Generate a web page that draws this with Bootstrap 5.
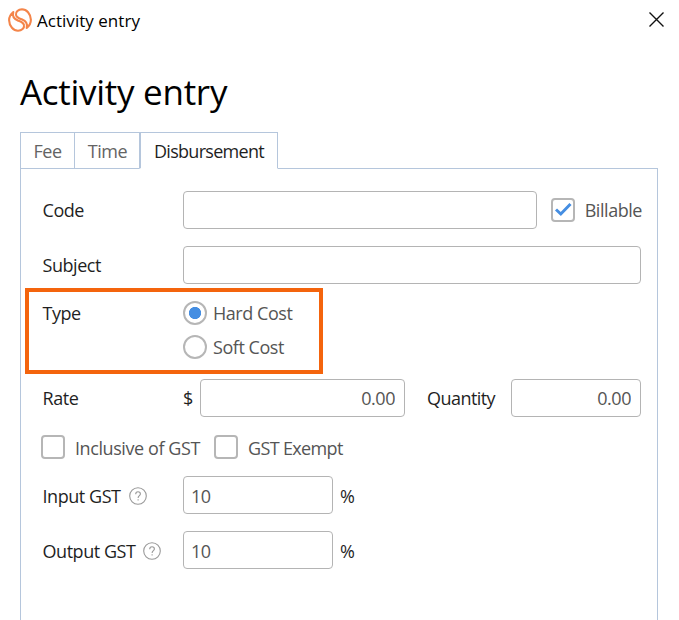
<!DOCTYPE html>
<html lang="en">
<head>
<meta charset="utf-8">
<meta name="viewport" content="width=device-width, initial-scale=1">
<title>Activity entry</title>
<link href="https://cdn.jsdelivr.net/npm/bootstrap@5.3.0/dist/css/bootstrap.min.css" rel="stylesheet">
<style>
  html, body { height: 100%; }
  body { font-family: "Open Sans", "Noto Sans", sans-serif; font-size: 18px; line-height: 24px; letter-spacing: -.45px; color: #1f1f1f; background: #fff; overflow: hidden; }
  .window { height: 620px; }
  .title-bar { height: 40px; padding: 0 14px 0 8px; color: #000; }
  .title-text { font-size: 17px; letter-spacing: .03px; margin-left: 5px; padding-top: 2px; }
  .page-title { font-size: 35px; line-height: 48px; letter-spacing: -.28px; color: #000; margin: 28px 0 16px 20px; font-weight: 400; }
  .tabs-area { margin: 0 21px 0 20px; }
  .nav-tabs { --bs-nav-tabs-border-width: 0; --bs-nav-tabs-border-radius: 0; height: 37px; margin-bottom: -1px; border: 0; z-index: 1; }
  .nav-tabs .nav-link { height: 37px; padding: 6px 0 0; border: 1px solid #b5c6dc; color: #646464; text-align: center; margin: 0; }
  .nav-tabs .nav-link.active { color: #1f1f1f; border: 1px solid #b5c6dc; border-bottom-color: #fff; border-left-width: 2px; background: #fff; letter-spacing: -.7px; }
  .tab-fee { width: 55px; }
  .nav-tabs .tab-time { width: 64px; border-left: 0; border-right: 0; padding-left: 1px; }
  .tab-disb { width: 139px; }
  .panel { border: 1px solid #b5c6dc; border-bottom: 0; padding: 22px 16px 0 21px; }
  .row-38 { height: 38px; margin-bottom: 17px; }
  .lbl { width: 141px; flex: none; padding-left: .5px; }
  .form-control { height: 38px; border: 1px solid #b4b4b4; border-radius: 4px; font-size: 18px; letter-spacing: -.45px; color: #555; padding: 0 9px 0 8px; }
  .form-check-input { width: 24px; height: 24px; margin: 0; border: 2px solid #b6b6b6; flex: none; }
  .form-check-input[type=checkbox] { border-radius: 4px; }
  .form-check-input:checked { background-color: #fff; border-color: #b6b6b6; }
  .form-check-input[type=checkbox]:checked { background-image: none; }
  .form-check-input[type=radio]:checked { background-image: radial-gradient(circle, #458ee2 0 5.700px, transparent 6.500px); background-size: 100% 100%; }
  .check-wrap svg { position: absolute; left: 4px; top: 4px; pointer-events: none; }
  .opt { color: #555; }
  .t-bill { margin-left: 10px; margin-right: -1px; }
  .radio-text { margin-left: 6px; }
  .radios { gap: 10px; }
  .highlight { height: 86px; width: 298px; border: 4px solid #f4640d; margin: -13px 0 5px -17px; padding: 9px 0 0 13px; }
  .checks { height: 24px; margin: 18px 0 17px -1px; }
  .checks .opt { margin-left: 10px; letter-spacing: -.42px; padding-top: 1px; }
  .checks .t-exempt { letter-spacing: -.65px; }
  .t-incl { width: 139px; }
  .w-code { width: 354px; }
  .cur { width: 17px; flex: none; }
  .w-rate { width: 205px; }
  .t-qty { margin-left: 22px; letter-spacing: -.55px; }
  .w-qty { width: 130px; }
  .w-gst { width: 150px; padding-left: 7px; padding-top: 1px; }
  .gst .lbl, .gst .pct { padding-top: 1px; }
  .help { margin-left: 8px; }
  .pct { margin-left: 7px; }
</style>
</head>
<body>
<div class="window d-flex flex-column">
  <header class="title-bar d-flex align-items-center flex-shrink-0">
    <svg width="24" height="24" viewBox="0 0 24 24" fill="none" stroke="#f4854a" stroke-width="2.1" stroke-linejoin="round">
      <path d="M5.300 4C2.600 6.200 1.100 9 1.100 12.200C1.300 18.500 5.500 22.700 10 22.700C13.800 22.500 16.500 20 16 17.200C15.600 14.600 13 13.700 10.300 12.700C6.800 11.300 3.800 9 5.300 4Z"/>
      <path d="M18.700 20C21.400 17.800 22.900 15 22.900 11.800C22.700 5.500 18.500 1.300 14 1.300C10.200 1.500 7.500 4 8 6.800C8.400 9.400 11 10.300 13.700 11.300C17.200 12.700 20.200 15 18.700 20Z"/>
    </svg>
    <span class="title-text">Activity entry</span>
    <svg class="ms-auto" width="16" height="16" viewBox="0 0 16 16" stroke="#111" stroke-width="1.4"><path d="M.5 .5 14.500 14.500M14.500 .5 .5 14.500"/></svg>
  </header>
  <h1 class="page-title flex-shrink-0">Activity entry</h1>
  <main class="tabs-area flex-grow-1 d-flex flex-column">
    <ul class="nav nav-tabs position-relative flex-shrink-0">
      <li class="nav-item"><a class="nav-link tab-fee" href="#">Fee</a></li>
      <li class="nav-item"><a class="nav-link tab-time" href="#">Time</a></li>
      <li class="nav-item"><a class="nav-link active tab-disb" href="#">Disbursement</a></li>
    </ul>
    <form class="panel flex-grow-1">
      <div class="row-38 d-flex align-items-center">
        <label class="lbl">Code</label>
        <input class="form-control w-code" type="text">
        <span class="check-wrap position-relative d-flex ms-auto">
          <input class="form-check-input" type="checkbox" checked>
          <svg width="17" height="16" viewBox="0 0 17 16" fill="none" stroke="#458ee2" stroke-width="3"><path d="M1 7.500 5.800 12 15.500 2"/></svg>
        </span>
        <span class="opt t-bill">Billable</span>
      </div>
      <div class="row-38 d-flex align-items-center">
        <label class="lbl">Subject</label>
        <input class="form-control" type="text">
      </div>
      <div class="highlight d-flex align-items-start">
        <label class="lbl">Type</label>
        <div class="radios d-flex flex-column">
          <div class="d-flex align-items-center"><input class="form-check-input" type="radio" name="cost" checked><span class="opt radio-text">Hard Cost</span></div>
          <div class="d-flex align-items-center"><input class="form-check-input" type="radio" name="cost"><span class="opt radio-text">Soft Cost</span></div>
        </div>
      </div>
      <div class="row-38 d-flex align-items-center">
        <label class="lbl">Rate</label>
        <span class="cur">$</span>
        <input class="form-control w-rate text-end" type="text" value="0.00">
        <label class="t-qty">Quantity</label>
        <input class="form-control w-qty text-end ms-auto" type="text" value="0.00">
      </div>
      <div class="d-flex align-items-center checks">
        <input class="form-check-input" type="checkbox"><span class="opt t-incl">Inclusive of GST</span>
        <input class="form-check-input" type="checkbox"><span class="opt t-exempt">GST Exempt</span>
      </div>
      <div class="row-38 gst d-flex align-items-center">
        <label class="lbl d-flex align-items-center">Input GST
          <svg class="help" width="18" height="18" viewBox="0 0 18 18" fill="none" stroke="#999" stroke-width="1.1"><circle cx="9" cy="9" r="8.300"/><path d="M6.700 7.200C6.700 5.600 7.700 4.800 9 4.800C10.400 4.800 11.400 5.600 11.400 6.900C11.400 8.500 9.100 8.700 9.100 10.900M9.100 12.200V13.500"/></svg>
        </label>
        <input class="form-control w-gst" type="text" value="10"><span class="pct">%</span>
      </div>
      <div class="row-38 gst d-flex align-items-center">
        <label class="lbl d-flex align-items-center">Output GST
          <svg class="help" width="18" height="18" viewBox="0 0 18 18" fill="none" stroke="#999" stroke-width="1.1"><circle cx="9" cy="9" r="8.300"/><path d="M6.700 7.200C6.700 5.600 7.700 4.800 9 4.800C10.400 4.800 11.400 5.600 11.400 6.900C11.400 8.500 9.100 8.700 9.100 10.900M9.100 12.200V13.500"/></svg>
        </label>
        <input class="form-control w-gst" type="text" value="10"><span class="pct">%</span>
      </div>
    </form>
  </main>
</div>
<script src="https://cdn.jsdelivr.net/npm/bootstrap@5.3.0/dist/js/bootstrap.bundle.min.js"></script>
</body>
</html>
